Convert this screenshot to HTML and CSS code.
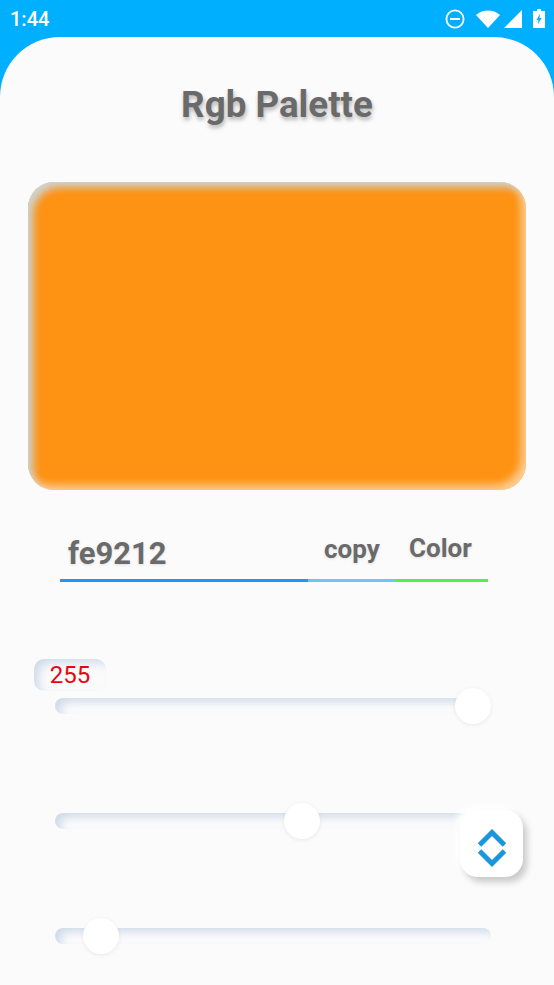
FILE: index.html
```html
<!DOCTYPE html>
<html lang="en">
<head>
<meta charset="utf-8">
<title>Rgb Palette</title>
<link rel="stylesheet" href="styles.css">
</head>
<body>
<div class="phone">
  <div class="status">
    <span class="time">1:44</span>
    <div class="status-icons">
      <svg class="i-dnd" width="20" height="20" viewBox="0 0 20 20"><circle cx="10" cy="10" r="8.600" fill="none" stroke="#fff" stroke-width="1.800"/><rect x="5" y="9" width="10" height="2" fill="#fff"/></svg>
      <svg class="i-wifi" width="24" height="18" viewBox="0 0 24 18"><path d="M0 5 C6.800 -0.900 17.200 -0.900 24 5 L12 18 Z" fill="#fff"/></svg>
      <svg class="i-signal" width="18" height="18" viewBox="0 0 18 18"><path d="M18 0 V18 H0 Z" fill="#fff"/></svg>
      <svg class="i-batt" width="12" height="19" viewBox="0 0 12 19"><path fill-rule="evenodd" d="M4 0 H8 V2 H12 V19 H0 V2 H4 Z M7 4.500 L3.500 11 H5.500 L5 15.500 L8.500 9 H6.500 Z" fill="#fff"/></svg>
    </div>
  </div>
  <main class="sheet">
    <h1 class="title">Rgb Palette</h1>
    <div class="swatch"></div>
    <div class="code-row">
      <div class="code-field"><span class="code">fe9212</span></div>
      <div class="copy-field"><span class="action">copy</span></div>
      <div class="color-field"><span class="action">Color</span></div>
    </div>
    <div class="sliders">
      <div class="track">
        <span class="bubble">255</span>
        <span class="thumb" style="left:400px"></span>
      </div>
      <div class="track">
        <span class="thumb" style="left:229px"></span>
      </div>
      <div class="track">
        <span class="thumb" style="left:28px"></span>
      </div>
    </div>
    <button class="fab" type="button" aria-label="Toggle">
      <svg width="28" height="38" viewBox="0 0 28 38"><path d="M1.500 16 L14 3.500 L26.500 16" fill="none" stroke="#1b96dc" stroke-width="5"/><path d="M1.500 22 L14 34.500 L26.500 22" fill="none" stroke="#1b96dc" stroke-width="5"/></svg>
    </button>
  </main>
</div>
</body>
</html>
```

FILE: styles.css
```css
* { box-sizing: border-box; }
html, body { margin: 0; padding: 0; }
body { width: 554px; height: 985px; overflow: hidden; background: #00b0ff; font-family: Roboto, sans-serif; }
.phone { height: 985px; display: flex; flex-direction: column; }
.status { height: 37px; flex: none; display: flex; align-items: center; justify-content: space-between; padding: 0 9px 0 10px; color: #fff; }
.time { font-size: 20px; font-weight: 500; line-height: 37px; position: relative; top: 1px; }
.status-icons { display: flex; align-items: center; }
.i-dnd { margin-right: 11px; }
.i-wifi { margin-right: 4px; }
.i-signal { margin-right: 11px; }
.sheet { position: relative; flex: 1; background: #fbfbfc; border-radius: 60px 60px 0 0; padding-top: 47px; }
.title { margin: 0; height: 42px; font-size: 36.75px; line-height: 42px; font-weight: 700; color: #6a6a6a; text-align: center; text-shadow: 1px 3px 4px rgba(0,0,0,.28); }
.swatch { margin: 56px 28px 0; height: 308px; border-radius: 26px; background: #fe9212;
  box-shadow: inset 6px 6px 8px -1px rgba(195,225,250,.85), inset -6px -6px 8px -1px rgba(255,255,255,.55); }
.code-row { margin: 0 66px 0 60px; height: 92px; display: flex; align-items: stretch; }
.code-field { width: 248px; border-bottom: 3px solid #2196f3; padding: 46px 0 0 8px; }
.code { display: block; font-size: 31px; line-height: 36px; font-weight: 700; color: #6a6a6a; text-shadow: 0 1px 3px rgba(0,0,0,.12); }
.copy-field { width: 87px; border-bottom: 3px solid #6ec6f5; padding: 43px 0 0 16px; }
.color-field { width: 93px; border-bottom: 3px solid #55f050; padding: 42px 0 0 14px; }
.action { display: block; font-size: 26px; line-height: 32px; font-weight: 700; color: #6a6a6a; text-shadow: 0 1px 3px rgba(0,0,0,.12); }
.sliders { margin: 116px 63px 0 55px; display: flex; flex-direction: column; gap: 99px; }
.track { position: relative; height: 16px; border-radius: 8px; background: #fbfbfc;
  box-shadow: inset 6px 5px 8px -1px rgba(190,205,225,.7); }
.thumb { position: absolute; top: -10px; width: 36px; height: 36px; border-radius: 50%; background: #fff; box-shadow: 0 1px 4px rgba(0,0,0,.08); }
.bubble { position: absolute; left: -21px; top: -39px; width: 72px; height: 32px; border-radius: 10px; background: #fbfbfc; color: #e8060f; font-size: 24px; line-height: 33px; text-align: center;
  box-shadow: inset 6px 5px 10px -1px rgba(190,205,225,.7); }
.fab { position: absolute; left: 460px; top: 773px; width: 63px; height: 67px; padding: 9px 0 0; border: 0; border-radius: 18px; background: #fff; display: flex; align-items: center; justify-content: center;
  box-shadow: 4px 5px 7px rgba(0,0,0,.2), -4px -4px 6px #fff; }
```
